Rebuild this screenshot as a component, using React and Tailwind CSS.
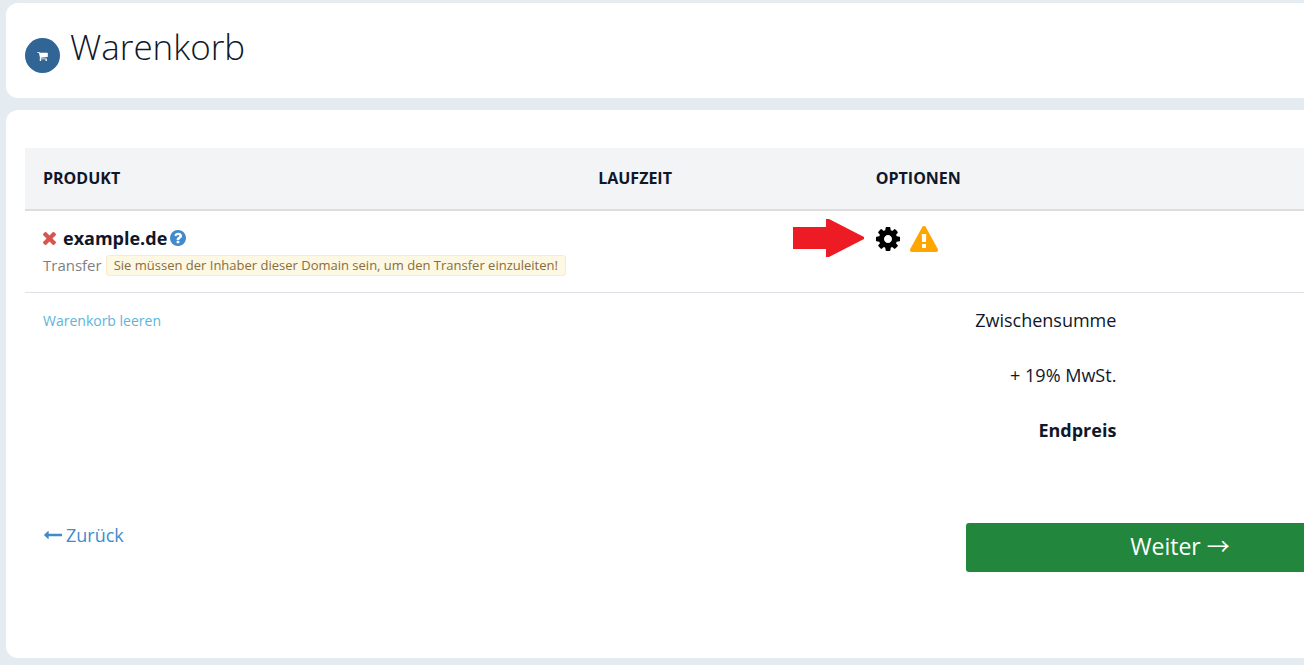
const paths = {
  cart: {
    box: "0 256 1664 1408",
    d: "M640 1536q0 52-38 90t-90 38-90-38-38-90 38-90 90-38 90 38 38 90zm896 0q0 52-38 90t-90 38-90-38-38-90 38-90 90-38 90 38 38 90zm128-1088v512q0 24-16.500 42.500t-40.500 21.500l-1044 122q13 60 13 70 0 16-24 64h920q26 0 45 19t19 45-19 45-45 19h-1024q-26 0-45-19t-19-45q0-11 8-31.500t16-36 21.500-40 15.500-29.500l-177-823h-204q-26 0-45-19t-19-45 19-45 45-19h256q16 0 28.500 6.500t19.500 15.500 13 24.500 8 26 5.500 29.500 4.500 26h1201q26 0 45 19t19 45z",
  },
  times: {
    box: "302 366 1188 1188",
    d: "M1490 1322q0 40-28 68l-136 136q-28 28-68 28t-68-28l-294-294-294 294q-28 28-68 28t-68-28l-136-136q-28-28-28-68t28-68l294-294-294-294q-28-28-28-68t28-68l136-136q28-28 68-28t68 28l294 294 294-294q28-28 68-28t68 28l136 136q28 28 28 68t-28 68l-294 294 294 294q28 28 28 68z",
  },
  help: {
    box: "128 128 1536 1536",
    d: "M1024 1376v-192q0-14-9-23t-23-9h-192q-14 0-23 9t-9 23v192q0 14 9 23t23 9h192q14 0 23-9t9-23zm256-672q0-88-55.500-163t-138.500-116-170-41q-243 0-371 213-15 24 8 42l132 100q7 6 19 6 16 0 25-12 53-68 86-92 34-24 86-24 48 0 85.500 26t37.500 59q0 38-20 61t-68 45q-63 28-115.500 86.500t-52.500 125.500v36q0 14 9 23t23 9h192q14 0 23-9t9-23q0-19 21.500-49.500t54.500-49.500q32-18 49-28.500t46-35 44.500-48 28-60.500 12.500-81zm384 192q0 209-103 385.500t-279.500 279.500-385.500 103-385.500-103-279.500-279.500-103-385.500 103-385.500 279.500-279.500 385.500-103 385.500 103 279.500 279.500 103 385.500z",
  },
  cog: {
    box: "128 128 1536 1536",
    d: "M1152 896q0-106-75-181t-181-75-181 75-75 181 75 181 181 75 181-75 75-181zm512-109v222q0 12-8 23t-20 13l-185 28q-19 54-39 91 35 50 107 138 10 12 10 25t-9 23q-27 37-99 108t-94 71q-12 0-26-9l-138-108q-44 23-91 38-16 136-29 186-7 28-36 28h-222q-14 0-24.500-8.500t-11.500-21.500l-28-184q-49-16-90-37l-141 107q-10 9-25 9-14 0-25-11-126-114-165-168-7-10-7-23 0-12 8-23 15-21 51-66.500t54-70.500q-27-50-41-99l-183-27q-13-2-21-12.500t-8-23.500v-222q0-12 8-23t19-13l186-28q14-46 39-92-40-57-107-138-10-12-10-24 0-10 9-23 26-36 98.500-107.500t94.500-71.500q13 0 26 10l138 107q44-23 91-38 16-136 29-186 7-28 36-28h222q14 0 24.500 8.500t11.500 21.500l28 184q49 16 90 37l142-107q9-9 24-9 13 0 25 10 129 119 165 170 7 8 7 22 0 12-8 23-15 21-51 66.500t-54 70.500q26 50 41 98l183 28q13 2 21 12.500t8 23.500z",
  },
  warning: {
    box: "0 0 1792 1664",
    d: "M1024 1375v-190q0-14-9.500-23.500t-22.500-9.500h-192q-13 0-22.500 9.500t-9.500 23.500v190q0 14 9.500 23.500t22.500 9.500h192q13 0 22.500-9.500t9.500-23.500zm-2-374l18-459q0-12-10-19-13-11-24-11h-220q-11 0-24 11-10 7-10 21l17 457q0 10 10 16.500t24 6.500h185q14 0 23.500-6.500t10.500-16.500zm-14-934l768 1408q35 63-2 126-17 29-46.500 46t-63.500 17h-1536q-34 0-63.500-17t-46.500-46q-37-63-2-126l768-1408q17-31 47-49t65-18 65 18 47 49z",
  },
  back: {
    box: "64 512 1728 768",
    d: "M1792 800v192q0 14-9 23t-23 9h-1248v224q0 21-19 29t-35-5l-384-350q-10-10-10-23 0-14 10-24l384-354q16-14 35-6 19 9 19 29v224h1248q14 0 23 9t9 23z",
  },
};

function Icon({ name, className }) {
  return (
    <svg viewBox={paths[name].box} className={className} fill="currentColor" aria-hidden="true">
      <path d={paths[name].d} />
    </svg>
  );
}

function TotalLabel({ children, bold }) {
  return (
    <th
      scope="row"
      colSpan={2}
      className={`h-[55px] px-[19px] text-right text-lg ${bold ? "font-bold" : "font-normal"}`}
    >
      {children}
    </th>
  );
}

export default function App() {
  return (
    <div className="min-h-screen overflow-hidden bg-[#e4ebf1] pt-[3px] pb-[7px] pl-[6px] font-['Open_Sans',sans-serif] text-[#0f172a]">
      <div className="-mr-32 flex flex-col gap-3">
        <header className="flex h-[95px] items-start gap-[10px] rounded-xl bg-white px-[19px] pt-5">
          <span className="mt-[15px] flex size-[35px] items-center justify-center rounded-full bg-[#306596] text-white">
            <Icon name="cart" className="mt-[2px] h-[9px] w-[11px]" />
          </span>
          <h1 className="text-[35px] leading-[48px] font-light">Warenkorb</h1>
        </header>

        <main className="rounded-xl bg-white px-[19px] pt-[38px] pb-[86px]">
          <table className="w-full table-fixed border-collapse text-left">
            <colgroup>
              <col className="w-2/5" />
              <col className="w-1/5" />
              <col className="w-1/5" />
              <col className="w-1/5" />
            </colgroup>
            <thead>
              <tr className="h-[62px] border-b-2 border-[#dddddd] bg-[#f2f4f6] text-base">
                <th className="px-[18px] pb-0.5 font-bold">PRODUKT</th>
                <th className="px-[18px] pb-0.5 font-bold">LAUFZEIT</th>
                <th className="px-[18px] pb-0.5 font-bold">OPTIONEN</th>
                <td />
              </tr>
            </thead>
            <tbody>
              <tr className="border-b border-[#dee2e6] align-top">
                <td className="px-[18px] py-[13px]">
                  <div className="flex h-7 items-center text-lg font-bold">
                    <button type="button" aria-label="Entfernen" className="mr-[7px] text-[#d9534f]">
                      <Icon name="times" className="size-[13px]" />
                    </button>
                    example.de
                    <button type="button" aria-label="Hilfe" className="ml-[3px] text-[#428bca]">
                      <Icon name="help" className="size-4" />
                    </button>
                  </div>
                  <div className="flex h-[27px] items-center gap-1 text-[15px] whitespace-nowrap text-[#808080]">
                    Transfer
                    <span className="rounded-[3px] border border-[#faebcc] bg-[#fcf8e3] px-[7px] text-[13px] leading-[19px] text-[#8a6d3b]">
                      Sie müssen der Inhaber dieser Domain sein, um den Transfer einzuleiten!
                    </span>
                  </div>
                </td>
                <td />
                <td className="px-[18px] pt-[14px]">
                  <div className="relative flex h-7 items-center gap-[10px]">
                    <svg
                      viewBox="0 0 71 38"
                      className="absolute -top-[6px] -left-[83px] h-[38px] w-[71px]"
                      fill="#ed1c24"
                      aria-hidden="true"
                    >
                      <path d="M0 8H33V0H36L71 18V20L36 38H33V30H0Z" />
                    </svg>
                    <button type="button" aria-label="Einstellungen" className="text-black">
                      <Icon name="cog" className="size-6" />
                    </button>
                    <span role="img" aria-label="Warnung" className="text-[#ffa500]">
                      <Icon name="warning" className="h-[26px] w-7" />
                    </span>
                  </div>
                </td>
                <td />
              </tr>
              <tr>
                <td rowSpan={3} className="px-[18px] pt-[18px] align-top text-sm">
                  <a href="#leeren" className="text-[#5bb5dc]">
                    Warenkorb leeren
                  </a>
                </td>
                <TotalLabel>Zwischensumme</TotalLabel>
                <td />
              </tr>
              <tr>
                <TotalLabel>+ 19% MwSt.</TotalLabel>
                <td />
              </tr>
              <tr>
                <TotalLabel bold>Endpreis</TotalLabel>
                <td />
              </tr>
            </tbody>
          </table>

          <div className="mt-[65px] flex items-start justify-between px-[19px]">
            <a href="#warenkorb" className="flex items-center gap-1 text-lg leading-6 text-[#428bca]">
              <Icon name="back" className="h-2 w-[18px]" />
              Zurück
            </a>
            <button
              type="button"
              className="h-[49px] w-[428px] rounded-[3px] bg-[#22873c] pb-1 text-[23px] leading-8 text-white"
            >
              Weiter <span className="font-['Noto_Sans_CJK_SC',sans-serif]">→</span>
            </button>
          </div>
        </main>
      </div>
    </div>
  );
}
